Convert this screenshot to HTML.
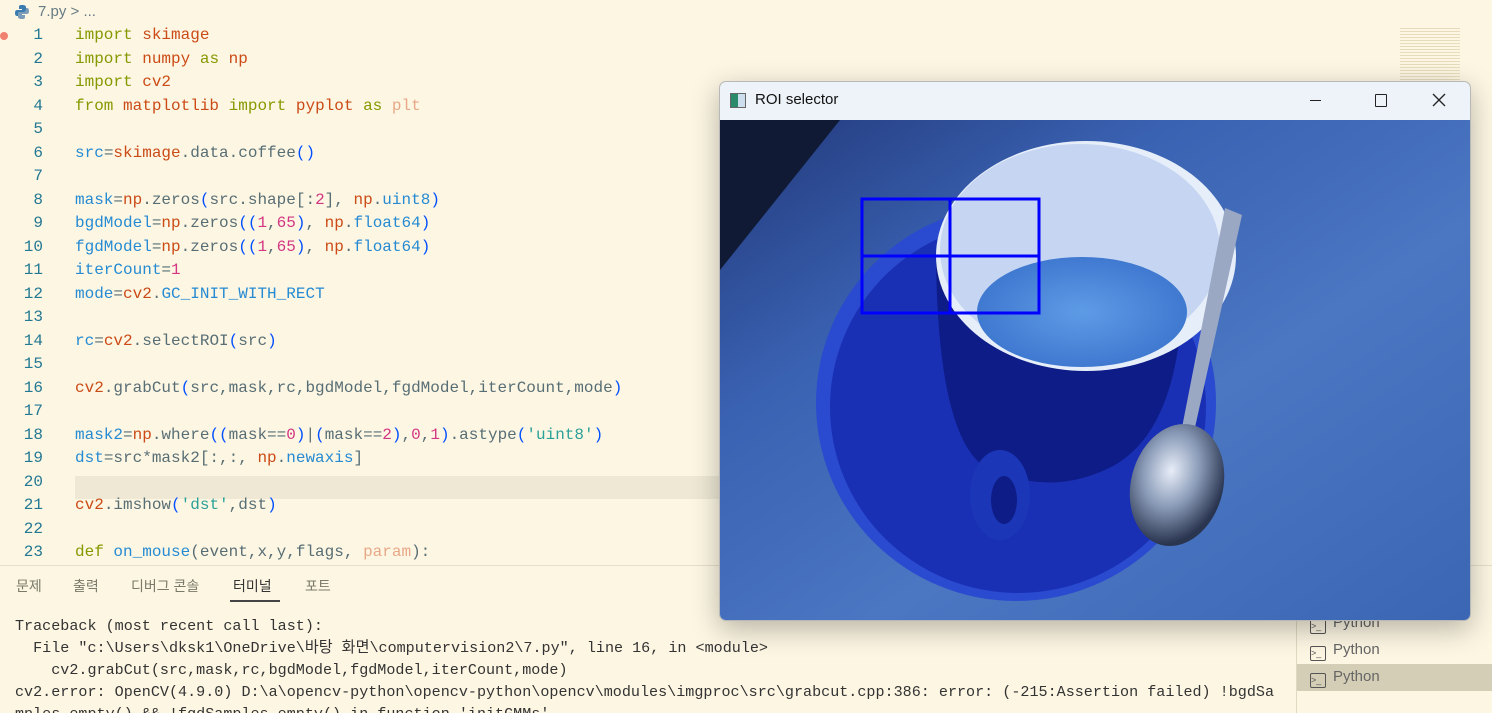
<!DOCTYPE html>
<html><head><meta charset="utf-8"><style>
html,body{margin:0;width:1492px;height:713px;overflow:hidden}
body{background:#fdf6e3;position:relative;font-family:"Liberation Mono",monospace}
.bc{position:absolute;left:38px;top:3px;font:15px "Liberation Sans",sans-serif;color:#657b83}
.ln{position:absolute;left:0;width:43px;text-align:right;color:#237893;font-size:16px;line-height:23.5px}
.cl{position:absolute;left:75px;font-size:16px;line-height:23.5px;white-space:pre;color:#586e75}
.k{color:#859900}.m{color:#cb4b16}.b{color:#268bd2}.n{color:#d33682}.s{color:#2aa198}.p{color:#0050ff}.f{color:#e8a888}
.panel{position:absolute;left:0;top:565px;width:1492px;height:148px;border-top:1px solid #e6dfc8;background:#fdf6e3}
.tab{position:absolute;top:576px;font:14px "Liberation Sans","Noto Sans CJK KR",sans-serif;color:#7a7a6a}
.term{position:absolute;left:15px;top:615px;font-size:15.1px;line-height:22px;color:#333;white-space:pre;font-family:"Liberation Mono","Noto Sans CJK KR",monospace}
.py{position:absolute;left:1310px;font:15px "Liberation Sans",sans-serif;color:#666}
.py i{display:inline-block;width:14px;height:13px;border:1.5px solid #555;border-radius:2px;vertical-align:-2px;margin-right:7px;font-style:normal;font-size:9px;line-height:12px;color:#555;text-align:left}
</style></head><body>
<svg style="position:absolute;left:14px;top:4px" width="16" height="16" viewBox="0 0 16 16"><path d="M8 1c-3 0-3 1-3 2v2h3v1H3c-1.5 0-2 1.5-2 3s.5 3 2 3h1v-2c0-1 1-2 2-2h4c1 0 2-1 2-2V3c0-1-1-2-4-2z" fill="#3a7cb0"/><path d="M8 15c3 0 3-1 3-2v-2H8v-1h5c1.5 0 2-1.5 2-3s-.5-3-2-3h-1v2c0 1-1 2-2 2H6c-1 0-2 1-2 2v3c0 1 1 2 4 2z" fill="#7a9cb8"/></svg>
<div class="bc">7.py &gt; ...</div>
<div style="position:absolute;left:0;top:32px;width:8px;height:8px;border-radius:50%;background:#f08070"></div>
<div style="position:absolute;left:75px;top:476px;width:660px;height:23px;background:#eee8d5"></div>
<div class="ln" style="top:24px">1<br>2<br>3<br>4<br>5<br>6<br>7<br>8<br>9<br>10<br>11<br>12<br>13<br>14<br>15<br>16<br>17<br>18<br>19<br>20<br>21<br>22<br>23</div>
<div class="cl" style="top:24px"><span class="k">import</span> <span class="m">skimage</span>
<span class="k">import</span> <span class="m">numpy</span> <span class="k">as</span> <span class="m">np</span>
<span class="k">import</span> <span class="m">cv2</span>
<span class="k">from</span> <span class="m">matplotlib</span> <span class="k">import</span> <span class="m">pyplot</span> <span class="k">as</span> <span class="f">plt</span>

<span class="b">src</span>=<span class="m">skimage</span>.data.coffee<span class="p">()</span>

<span class="b">mask</span>=<span class="m">np</span>.zeros<span class="p">(</span>src.shape[:<span class="n">2</span>], <span class="m">np</span>.<span class="b">uint8</span><span class="p">)</span>
<span class="b">bgdModel</span>=<span class="m">np</span>.zeros<span class="p">((</span><span class="n">1</span>,<span class="n">65</span><span class="p">)</span>, <span class="m">np</span>.<span class="b">float64</span><span class="p">)</span>
<span class="b">fgdModel</span>=<span class="m">np</span>.zeros<span class="p">((</span><span class="n">1</span>,<span class="n">65</span><span class="p">)</span>, <span class="m">np</span>.<span class="b">float64</span><span class="p">)</span>
<span class="b">iterCount</span>=<span class="n">1</span>
<span class="b">mode</span>=<span class="m">cv2</span>.<span class="b">GC_INIT_WITH_RECT</span>

<span class="b">rc</span>=<span class="m">cv2</span>.selectROI<span class="p">(</span>src<span class="p">)</span>

<span class="m">cv2</span>.grabCut<span class="p">(</span>src,mask,rc,bgdModel,fgdModel,iterCount,mode<span class="p">)</span>

<span class="b">mask2</span>=<span class="m">np</span>.where<span class="p">((</span>mask==<span class="n">0</span><span class="p">)</span>|<span class="p">(</span>mask==<span class="n">2</span><span class="p">)</span>,<span class="n">0</span>,<span class="n">1</span><span class="p">)</span>.astype<span class="p">(</span><span class="s">'uint8'</span><span class="p">)</span>
<span class="b">dst</span>=src*mask2[:,:, <span class="m">np</span>.<span class="b">newaxis</span>]

<span class="m">cv2</span>.imshow<span class="p">(</span><span class="s">'dst'</span>,dst<span class="p">)</span>

<span class="k">def</span> <span class="b">on_mouse</span>(event,x,y,flags, <span class="f">param</span>):</div>
<div style="position:absolute;left:1400px;top:26px;width:60px;height:60px;background:repeating-linear-gradient(#fdf6e3 0 2px,#d8c9a0 2px 3px);opacity:.6"></div>
<div class="panel"></div>
<div class="tab" style="left:16px">문제</div>
<div class="tab" style="left:73px">출력</div>
<div class="tab" style="left:131px">디버그 콘솔</div>
<div class="tab" style="left:233px;color:#333">터미널</div>
<div style="position:absolute;left:230px;top:600px;width:50px;height:2px;background:#444"></div>
<div class="tab" style="left:305px">포트</div>
<div class="term">Traceback (most recent call last):
  File "c:\Users\dksk1\OneDrive\바탕 화면\computervision2\7.py", line 16, in &lt;module&gt;
    cv2.grabCut(src,mask,rc,bgdModel,fgdModel,iterCount,mode)
cv2.error: OpenCV(4.9.0) D:\a\opencv-python\opencv-python\opencv\modules\imgproc\src\grabcut.cpp:386: error: (-215:Assertion failed) !bgdSa
mples.empty() &amp;&amp; !fgdSamples.empty() in function 'initGMMs'</div>
<div style="position:absolute;left:1296px;top:565px;width:1px;height:148px;background:#e0d8c0"></div>
<div style="position:absolute;left:1297px;top:664px;width:195px;height:27px;background:#d5ceb6"></div>
<div class="py" style="top:614px"><i>&gt;_</i>Python</div>
<div class="py" style="top:641px"><i>&gt;_</i>Python</div>
<div class="py" style="top:668px"><i>&gt;_</i>Python</div>
<div style="position:absolute;left:719px;top:81px;width:750px;height:538px;border:1px solid #b8b8b8;border-radius:7px;overflow:hidden;box-shadow:0 8px 28px rgba(0,0,0,.28);background:#eef3f9">
<div style="position:absolute;left:10px;top:11px;width:14px;height:13px;border:1px solid #666;background:linear-gradient(90deg,#2a8a6a 50%,#cde 50%)"></div>
<div style="position:absolute;left:35px;top:9px;font:15px 'Liberation Sans',sans-serif;color:#111">ROI selector</div>
<div style="position:absolute;left:590px;top:18px;width:11px;height:1px;background:#222"></div>
<div style="position:absolute;left:655px;top:12px;width:10px;height:11px;border:1px solid #222;border-radius:1px"></div>
<svg style="position:absolute;left:712px;top:11px" width="14" height="14"><path d="M1 1L13 13M13 1L1 13" stroke="#222" stroke-width="1.3"/></svg>
<svg style="position:absolute;left:0;top:38px" width="750" height="500" viewBox="0 0 750 500">
<defs>
<linearGradient id="tb" x1="0" y1="0" x2="1" y2="1"><stop offset="0" stop-color="#22387a"/><stop offset=".3" stop-color="#3a62b2"/><stop offset=".6" stop-color="#4a76c2"/><stop offset="1" stop-color="#3a66b4"/></linearGradient>
<radialGradient id="cof" cx=".5" cy=".5" r=".6"><stop offset="0" stop-color="#5e9be6"/><stop offset="1" stop-color="#3a72cc"/></radialGradient>
<radialGradient id="sp" cx=".4" cy=".4" r=".6"><stop offset="0" stop-color="#e8eef8"/><stop offset=".5" stop-color="#8a9bb8"/><stop offset="1" stop-color="#2a3550"/></radialGradient>
</defs>
<rect width="750" height="500" fill="url(#tb)"/>
<path d="M0 0H120L0 150Z" fill="#101a34"/>
<ellipse cx="296" cy="283" rx="200" ry="198" fill="#2a4ad0"/>
<ellipse cx="298" cy="287" rx="188" ry="186" fill="#1a30b4"/>
<path d="M216 140 Q218 310 262 345 Q330 380 395 345 Q455 310 462 190Z" fill="#0e1c88"/>
<ellipse cx="280" cy="375" rx="30" ry="45" fill="#1c36b8"/>
<ellipse cx="284" cy="380" rx="13" ry="24" fill="#0e1c88"/>
<ellipse cx="366" cy="136" rx="150" ry="115" fill="#e6eefa"/>
<ellipse cx="360" cy="130" rx="140" ry="106" fill="#c6d6f2"/>
<ellipse cx="362" cy="192" rx="105" ry="55" fill="url(#cof)"/>
<path d="M505 88 L522 95 L470 330 L458 328Z" fill="#9aa8c4"/>
<ellipse cx="457" cy="365" rx="46" ry="62" fill="url(#sp)" transform="rotate(15 457 365)"/>
<rect x="142" y="79" width="177" height="114" fill="none" stroke="#0000ff" stroke-width="3"/>
<line x1="230" y1="79" x2="230" y2="193" stroke="#0000ff" stroke-width="3"/>
<line x1="142" y1="136" x2="319" y2="136" stroke="#0000ff" stroke-width="3"/>
</svg>
</div>
</body></html>
